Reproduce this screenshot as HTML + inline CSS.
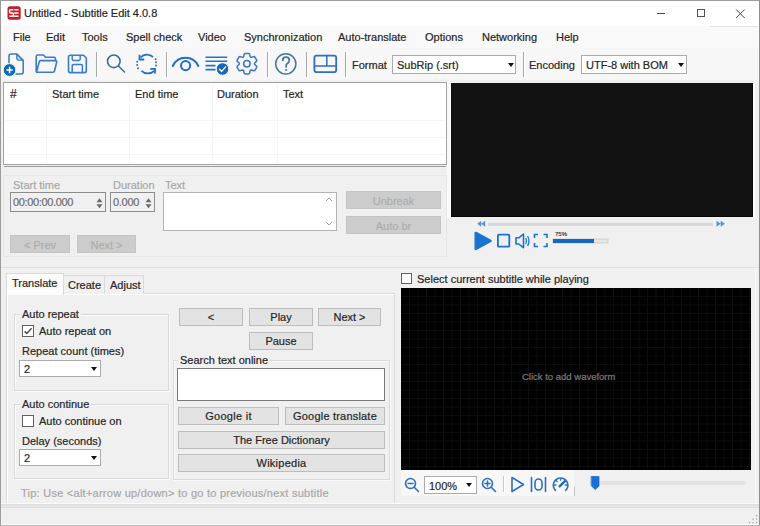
<!DOCTYPE html>
<html><head><meta charset="utf-8">
<style>
*{box-sizing:border-box;margin:0;padding:0}
html,body{width:760px;height:526px;overflow:hidden;background:#f0f0f0}
body{font-family:"Liberation Sans",sans-serif;font-size:11px;color:#262626;position:relative;-webkit-text-stroke:0.2px}
.a{position:absolute}
.t{position:absolute;white-space:nowrap;line-height:12px}
.dis{color:#a8a8a8}
.btn{position:absolute;background:#e3e3e3;border:1px solid #bdbdbd;text-align:center;line-height:17px;white-space:nowrap}
.btnd{position:absolute;background:#cccccc;border:1px solid #c4c4c4;color:#adadad;text-align:center;line-height:19px;white-space:nowrap}
.sep{position:absolute;width:1px;background:#a8a8a8;box-shadow:1px 0 0 #fff}
.combo{position:absolute;background:#fff;border:1px solid #ababab;white-space:nowrap}
.arrow{position:absolute;width:0;height:0;border-left:3.5px solid transparent;border-right:3.5px solid transparent;border-top:4px solid #111}
.gb{position:absolute;border:1px solid #d9d9d9;box-shadow:inset 1px 1px 0 #fbfbfb,1px 1px 0 #fbfbfb}
.cb{position:absolute;width:12px;height:12px;border:1.4px solid #606060;background:#fff}
</style></head><body>
<!-- window frame -->
<div class="a" style="left:0;top:0;width:760px;height:526px;border:1px solid #9c9c9c;border-right-color:#8f8f8f;border-bottom-color:#b8b8b8"></div>
<!-- title bar -->
<div class="a" style="left:1px;top:1px;width:758px;height:25px;background:#fff"></div>
<svg class="a" style="left:0;top:0" width="30" height="26"><rect x="7.5" y="6.2" width="13.2" height="13.5" rx="2.5" fill="#c41f2b"/><path d="M13.4 9.7H10.4Q9.6 9.7 9.6 10.5V12.1Q9.6 12.9 10.4 12.9H12.6Q13.4 12.9 13.4 13.7V15.4Q13.4 16.2 12.6 16.2H9.4M14.2 9.7H18.5M14.2 12.9H18.5M14.2 16.2H18.5" fill="none" stroke="#fff" stroke-width="1.5"/></svg>
<div class="t" style="left:24px;top:7px;font-size:11px">Untitled - Subtitle Edit 4.0.8</div>
<div class="a" style="left:657px;top:13px;width:8px;height:1px;background:#505050"></div>
<div class="a" style="left:697px;top:9px;width:8px;height:8px;border:1px solid #505050"></div>
<svg class="a" style="left:735px;top:8px" width="11" height="11"><path d="M1.2 1.5L9.7 10M9.7 1.5L1.2 10" stroke="#444" stroke-width="1"/></svg>
<!-- menu bar -->
<div class="a" style="left:1px;top:26px;width:758px;height:22px;background:#f9f9f9"></div>
<div class="a" style="left:710px;top:26px;width:48px;height:1px;background:#e2e2e2"></div>
<div class="t" style="left:13px;top:31px">File</div>
<div class="t" style="left:46px;top:31px">Edit</div>
<div class="t" style="left:82px;top:31px">Tools</div>
<div class="t" style="left:126px;top:31px">Spell check</div>
<div class="t" style="left:198px;top:31px">Video</div>
<div class="t" style="left:244px;top:31px">Synchronization</div>
<div class="t" style="left:338px;top:31px">Auto-translate</div>
<div class="t" style="left:425px;top:31px">Options</div>
<div class="t" style="left:482px;top:31px">Networking</div>
<div class="t" style="left:556px;top:31px">Help</div>
<!-- toolbar -->
<div class="a" style="left:1px;top:48px;width:758px;height:32px;background:#f7f7f7"></div>
<div class="sep" style="left:96px;top:52px;height:25px"></div>
<div class="sep" style="left:166px;top:52px;height:25px"></div>
<div class="sep" style="left:267px;top:52px;height:25px"></div>
<div class="sep" style="left:306px;top:52px;height:25px"></div>
<div class="sep" style="left:345px;top:52px;height:25px"></div>
<div class="sep" style="left:523px;top:52px;height:25px"></div>
<div class="t" style="left:352px;top:59px">Format</div>
<div class="combo" style="left:392px;top:55px;width:124px;height:19px"><span class="t" style="left:4px;top:3px">SubRip (.srt)</span><div class="arrow" style="left:115px;top:7px"></div></div>
<div class="t" style="left:529px;top:59px">Encoding</div>
<div class="combo" style="left:581px;top:55px;width:106px;height:19px"><span class="t" style="left:4px;top:3px">UTF-8 with BOM</span><div class="arrow" style="left:96px;top:7px"></div></div>
<svg class="a" style="left:0;top:0" width="760" height="526" fill="none" stroke-linecap="round" stroke-linejoin="round">
<!-- new file -->
<path d="M9 63V56Q9 54 11 54H16.8L23.2 60.4V72Q23.2 74 21.2 74H16" stroke="#3f78b4" stroke-width="1.5"/>
<path d="M16.8 54.3V58.6Q16.8 60.1 18.3 60.1H22.9Z" fill="#c2e2f8" stroke="#3f78b4" stroke-width="1.3"/>
<circle cx="9.6" cy="70" r="6.4" fill="#0f69b9" stroke="#f7f7f7" stroke-width="1"/>
<path d="M9.6 66.8V73.2M6.4 70H12.8" stroke="#fff" stroke-width="1.6" stroke-linecap="butt"/>
<!-- open folder -->
<path d="M36.2 71.5V56.5Q36.2 55 37.7 55H43.5L45.5 57.2H54Q55.5 57.2 55.5 58.7V60.5" stroke="#3a7cca" stroke-width="1.6"/>
<path d="M36.5 72.2L39.2 61.8Q39.5 60.6 40.7 60.6H55.5Q57 60.6 56.7 62L54.5 71Q54.2 72.2 53 72.2Z" stroke="#3a7cca" stroke-width="1.6"/>
<!-- save -->
<path d="M68.5 57Q68.5 55.2 70.3 55.2H83.5L86.3 58V70.8Q86.3 72.6 84.5 72.6H70.3Q68.5 72.6 68.5 70.8Z" stroke="#3a7cca" stroke-width="1.6"/>
<path d="M72.2 55.5V59Q72.2 60.4 73.6 60.4H78.8Q80.2 60.4 80.2 59V55.5" stroke="#3a7cca" stroke-width="1.5"/>
<path d="M72.2 72.3V65.8Q72.2 64.6 73.4 64.6H81.2Q82.4 64.6 82.4 65.8V72.3" stroke="#3a7cca" stroke-width="1.5"/>
<!-- search -->
<circle cx="113.8" cy="61.3" r="6.3" stroke="#3c6c9c" stroke-width="1.6"/>
<path d="M118.5 66L124.5 72" stroke="#3c6c9c" stroke-width="1.6"/>
<!-- sync -->
<path d="M140.5 57.5A9 9 0 0 1 153 57" stroke="#1f70c6" stroke-width="1.8" stroke-linecap="butt"/>
<path d="M139.5 54.8V59.5H144.2" stroke="#1f70c6" stroke-width="1.8" stroke-linecap="butt" stroke-linejoin="miter"/>
<path d="M141.5 70.8A9 9 0 0 0 154 71" stroke="#1f70c6" stroke-width="1.8" stroke-linecap="butt"/>
<path d="M155 73.5V68.8H150.3" stroke="#1f70c6" stroke-width="1.8" stroke-linecap="butt" stroke-linejoin="miter"/>
<g fill="#48698c" stroke="none"><circle cx="137.2" cy="61.8" r="1"/><circle cx="137.2" cy="65" r="1"/><circle cx="138" cy="68.2" r="1"/><circle cx="155.6" cy="59.3" r="1"/><circle cx="156" cy="62.2" r="1"/><circle cx="156" cy="65.5" r="1"/></g>
<!-- eye -->
<path d="M172.8 66A14 14 0 0 1 198.3 66" stroke="#1f70c6" stroke-width="2"/>
<circle cx="185.6" cy="65.6" r="4.6" stroke="#1f70c6" stroke-width="2"/>
<!-- list check -->
<path d="M205.5 57.2H227.2M205.5 61.2H227.2M205.5 65.6H215.5M205.5 69.6H215.5" stroke="#2372c6" stroke-width="1.6" stroke-linecap="butt"/>
<circle cx="222.6" cy="69" r="6.3" fill="#1569bd" stroke="#f7f7f7" stroke-width="1"/>
<path d="M219.6 69.3L221.7 71.4L225.6 66.9" stroke="#fff" stroke-width="1.4"/>
<!-- gear -->
<path d="M243.10 57.12L243.57 56.87L244.29 53.94L245.09 53.46L248.71 53.46L249.51 53.94L250.23 56.87L250.70 57.12L251.15 57.40L254.04 56.56L254.87 57.02L256.67 60.14L256.66 61.09L254.48 63.17L254.50 63.70L254.48 64.23L256.66 66.31L256.67 67.26L254.87 70.38L254.04 70.84L251.15 70.00L250.70 70.28L250.23 70.53L249.51 73.46L248.71 73.94L245.09 73.94L244.29 73.46L243.57 70.53L243.10 70.28L242.65 70.00L239.76 70.84L238.93 70.38L237.13 67.26L237.14 66.31L239.32 64.23L239.30 63.70L239.32 63.17L237.14 61.09L237.13 60.14L238.93 57.02L239.76 56.56L242.65 57.40Z" stroke="#3a78c0" stroke-width="1.5"/>
<circle cx="246.9" cy="63.8" r="3.2" stroke="#3a78c0" stroke-width="1.5"/>
<!-- help -->
<circle cx="285.8" cy="63.8" r="10.1" stroke="#4275a8" stroke-width="1.5"/>
<path d="M282.7 60.4Q282.7 57.1 286 57.1Q289.3 57.1 289.3 60.3Q289.3 62.4 287.3 63.5Q286.1 64.2 286.1 66.2V67" stroke="#4275a8" stroke-width="1.7"/>
<circle cx="286.1" cy="70" r="1.05" fill="#4275a8" stroke="none"/>
<!-- layout -->
<rect x="314.4" y="55.6" width="21.8" height="16.6" rx="2.2" stroke="#2f6fbf" stroke-width="1.8"/>
<path d="M314.4 66H336M326.8 55.6V66" stroke="#2f6fbf" stroke-width="1.5"/>
</svg>
<!-- list view -->
<div class="a" style="left:3px;top:82px;width:444px;height:83px;background:#fff;border:1px solid #a3a3a3"></div>
<div class="a" style="left:4px;top:166px;width:442px;height:1px;background:#9a9a9a"></div>
<div class="a" style="left:447px;top:81px;width:4px;height:137px;background:#fafafa"></div>
<div class="t" style="left:10px;top:88px;font-size:12px">#</div>
<div class="t" style="left:52px;top:88px">Start time</div>
<div class="t" style="left:135px;top:88px">End time</div>
<div class="t" style="left:217px;top:88px">Duration</div>
<div class="t" style="left:283px;top:88px">Text</div>
<!-- video -->
<div class="a" style="left:451px;top:83px;width:302px;height:134px;background:#121212;border-right:1px solid #050505;border-bottom:1px solid #050505"></div>
<!-- list grid lines -->
<div class="a" style="left:46px;top:84px;width:1px;height:80px;background:#f5f5f5"></div>
<div class="a" style="left:129px;top:84px;width:1px;height:80px;background:#f5f5f5"></div>
<div class="a" style="left:212px;top:84px;width:1px;height:80px;background:#f5f5f5"></div>
<div class="a" style="left:277px;top:84px;width:1px;height:80px;background:#f5f5f5"></div>
<div class="a" style="left:5px;top:120px;width:440px;height:1px;background:#f5f5f5"></div>
<div class="a" style="left:5px;top:137px;width:440px;height:1px;background:#f5f5f5"></div>
<div class="a" style="left:5px;top:154px;width:440px;height:1px;background:#f5f5f5"></div>
<!-- edit panel -->
<div class="a" style="left:3px;top:175px;width:444px;height:82px;border:1px solid #e6e6e6"></div>
<div class="t dis" style="left:13px;top:179px">Start time</div>
<div class="t dis" style="left:113px;top:179px">Duration</div>
<div class="t dis" style="left:165px;top:179px">Text</div>
<div class="a" style="left:10px;top:192px;width:96px;height:20px;border:1px solid #8c8c8c"></div>
<div class="t" style="left:13px;top:196px;color:#6d6d6d;letter-spacing:-0.35px">00:00:00.000</div>
<svg class="a" style="left:95px;top:196px" width="9" height="14"><path d="M1.5 6.2L4.5 2.2L7.5 6.2ZM1.5 8.2L4.5 12.2L7.5 8.2Z" fill="#6a6a6a"/></svg>
<div class="a" style="left:110px;top:192px;width:45px;height:20px;border:1px solid #8c8c8c"></div>
<div class="t" style="left:113px;top:196px;color:#6d6d6d;letter-spacing:-0.3px">0.000</div>
<svg class="a" style="left:144px;top:196px" width="9" height="14"><path d="M1.5 6.2L4.5 2.2L7.5 6.2ZM1.5 8.2L4.5 12.2L7.5 8.2Z" fill="#6a6a6a"/></svg>
<div class="a" style="left:163px;top:192px;width:174px;height:39px;border:1px solid #b4b4b4;background:#fff"></div>
<svg class="a" style="left:323px;top:193px" width="12" height="37" fill="none" stroke="#a0a0a0" stroke-width="1"><path d="M3 8L6 5L9 8M3 29L6 32L9 29"/></svg>
<div class="btnd" style="left:346px;top:191px;width:95px;height:18px">Unbreak</div>
<div class="btnd" style="left:346px;top:216px;width:95px;height:18px">Auto br</div>
<div class="btnd" style="left:10px;top:235px;width:60px;height:18px">&lt; Prev</div>
<div class="btnd" style="left:77px;top:235px;width:59px;height:18px">Next &gt;</div>
<!-- video controls -->
<svg class="a" style="left:0;top:0" width="760" height="526">
<path d="M477.2 223.8L481.2 220.8V226.8ZM481.2 223.8L485.2 220.8V226.8Z" fill="#5a8fd0"/>
<rect x="488" y="222.8" width="225" height="3" fill="#d6d6d6"/>
<path d="M716.5 220.8V226.8L720.7 223.8ZM720.7 220.8V226.8L724.9 223.8Z" fill="#5a8fd0"/>
<path d="M475.8 233L490.5 240.8L475.8 248.8Z" fill="#1a73d1" stroke="#1a73d1" stroke-width="2.6" stroke-linejoin="round"/>
<rect x="497.9" y="234.7" width="11.4" height="12" rx="0.8" fill="none" stroke="#1a73d1" stroke-width="1.8"/>
<path d="M516 237.8H518.8L523.5 234V247.8L518.8 244H516Z" fill="none" stroke="#1a73d1" stroke-width="1.6" stroke-linejoin="round"/>
<path d="M525.8 238Q527.3 241 525.8 244M527.6 236Q530.4 241 527.6 246" fill="none" stroke="#1a73d1" stroke-width="1.3"/>
<path d="M534.5 238V234.5H538M543.5 234.5H547V238M547 243V246.5H543.5M538 246.5H534.5V243" fill="none" stroke="#1a73d1" stroke-width="1.6"/>
<rect x="553" y="239" width="55" height="4" fill="#e6e6e6" stroke="#c8c8c8" stroke-width="0.8"/>
<rect x="553" y="239" width="41" height="4" fill="#1466c0"/>
</svg>
<div class="t" style="left:555px;top:231px;font-size:6px;line-height:7px;color:#444">75%</div>
<!-- separator line -->
<div class="a" style="left:1px;top:267px;width:758px;height:1px;background:#e0e0e0"></div>
<!-- tab control -->
<div class="a" style="left:6px;top:293px;width:389px;height:212px;border:1px solid #dadada;background:#f0f0f0"></div>
<div class="a" style="left:7px;top:294px;width:387px;height:210px;border-left:1px solid #fff;border-top:1px solid #fff"></div>
<div class="a" style="left:63px;top:275px;width:42px;height:19px;border:1px solid #dadada;border-bottom:none;background:#f0f0f0"></div>
<div class="a" style="left:104px;top:275px;width:40px;height:19px;border:1px solid #dadada;border-bottom:none;background:#f0f0f0"></div>
<div class="a" style="left:6px;top:273px;width:58px;height:22px;border:1px solid #dadada;border-bottom:none;background:#fcfcfc"></div>
<div class="t" style="left:12px;top:277px">Translate</div>
<div class="t" style="left:68px;top:279px">Create</div>
<div class="t" style="left:110px;top:279px">Adjust</div>
<!-- auto repeat group -->
<div class="gb" style="left:14px;top:314px;width:155px;height:77px"></div>
<div class="t" style="left:20px;top:308px;background:#f0f0f0;padding:0 2px">Auto repeat</div>
<div class="cb" style="left:22px;top:325px"></div>
<svg class="a" style="left:22px;top:325px" width="12" height="12"><path d="M2.6 6.4L4.8 8.4L9.6 3.2" fill="none" stroke="#505050" stroke-width="1.5"/></svg>
<div class="t" style="left:39px;top:325px">Auto repeat on</div>
<div class="t" style="left:22px;top:345px">Repeat count (times)</div>
<div class="combo" style="left:19px;top:360px;width:82px;height:17px"><span class="t" style="left:4px;top:2px">2</span><div class="arrow" style="left:71px;top:6px"></div></div>
<!-- auto continue group -->
<div class="gb" style="left:14px;top:404px;width:155px;height:75px"></div>
<div class="t" style="left:20px;top:398px;background:#f0f0f0;padding:0 2px">Auto continue</div>
<div class="cb" style="left:22px;top:415px"></div>
<div class="t" style="left:39px;top:415px">Auto continue on</div>
<div class="t" style="left:22px;top:435px">Delay (seconds)</div>
<div class="combo" style="left:19px;top:449px;width:82px;height:17px"><span class="t" style="left:4px;top:2px">2</span><div class="arrow" style="left:71px;top:6px"></div></div>
<!-- buttons -->
<div class="btn" style="left:179px;top:308px;width:64px;height:18px">&lt;</div>
<div class="btn" style="left:249px;top:308px;width:64px;height:18px">Play</div>
<div class="btn" style="left:318px;top:308px;width:63px;height:18px">Next &gt;</div>
<div class="btn" style="left:249px;top:332px;width:64px;height:18px">Pause</div>
<div class="gb" style="left:173px;top:360px;width:217px;height:120px"></div>
<div class="t" style="left:178px;top:354px;background:#f0f0f0;padding:0 2px">Search text online</div>
<div class="a" style="left:177px;top:368px;width:208px;height:33px;background:#fff;border:1px solid #7a7a7a"></div>
<div class="btn" style="left:178px;top:407px;width:101px;height:18px;letter-spacing:0.3px">Google it</div>
<div class="btn" style="left:285px;top:407px;width:100px;height:18px;letter-spacing:0.2px">Google translate</div>
<div class="btn" style="left:178px;top:431px;width:207px;height:18px">The Free Dictionary</div>
<div class="btn" style="left:178px;top:454px;width:207px;height:18px;letter-spacing:0.25px">Wikipedia</div>
<div class="t dis" style="left:21px;top:487px;letter-spacing:0.25px">Tip: Use &lt;alt+arrow up/down&gt; to go to previous/next subtitle</div>
<!-- right bottom -->
<div class="cb" style="left:401px;top:273px;width:11px;height:11px"></div>
<div class="t" style="left:417px;top:273px">Select current subtitle while playing</div>
<svg class="a" style="left:401px;top:288px" width="350" height="182"><rect width="350" height="182" fill="#000"/><path d="M8.5 0V181M17 0V181M25.5 0V181M34 0V181M42.5 0V181M51 0V181M59.5 0V181M68 0V181M76.5 0V181M85 0V181M93.5 0V181M102 0V181M110.5 0V181M119 0V181M127.5 0V181M136 0V181M144.5 0V181M153 0V181M161.5 0V181M170 0V181M178.5 0V181M187 0V181M195.5 0V181M204 0V181M212.5 0V181M221 0V181M229.5 0V181M238 0V181M246.5 0V181M255 0V181M263.5 0V181M272 0V181M280.5 0V181M289 0V181M297.5 0V181M306 0V181M314.5 0V181M323 0V181M331.5 0V181M340 0V181M348.5 0V181M0 8.5H350M0 17H350M0 25.5H350M0 34H350M0 42.5H350M0 51H350M0 59.5H350M0 68H350M0 76.5H350M0 85H350M0 93.5H350M0 102H350M0 110.5H350M0 119H350M0 127.5H350M0 136H350M0 144.5H350M0 153H350M0 161.5H350M0 170H350M0 178.5H350" stroke="#0d0d0d" stroke-width="1"/></svg>
<div class="t" style="left:522px;top:371px;color:#7c7c7c;font-size:9.5px">Click to add waveform</div>
<div class="a" style="left:401px;top:470px;width:173px;height:26px;background:#f7f7f7"></div>
<div class="a" style="left:574px;top:487px;width:1px;height:9px;background:#c8c8c8"></div>
<div class="combo" style="left:424px;top:476px;width:53px;height:18px"><span class="t" style="left:4px;top:3px">100%</span><div class="arrow" style="left:41px;top:6px"></div></div>
<div class="sep" style="left:503px;top:476px;height:16px;background:#c8c8c8"></div>
<svg class="a" style="left:0;top:0" width="760" height="526" fill="none" stroke-linecap="round">
<circle cx="410.5" cy="483.5" r="5" stroke="#2f6fbf" stroke-width="1.6"/><path d="M408 483.5H413M414.2 487.2L418.5 491.5" stroke="#2f6fbf" stroke-width="1.6"/>
<circle cx="487.5" cy="483.5" r="5" stroke="#2f6fbf" stroke-width="1.6"/><path d="M485 483.5H490M487.5 481V486M491.2 487.2L495.5 491.5" stroke="#2f6fbf" stroke-width="1.6"/>
<path d="M512 477.5L523.5 484.5L512 491.5Z" stroke="#2f6fbf" stroke-width="1.6" stroke-linejoin="round"/>
<path d="M531.5 477.5V491.5M545.5 477.5V491.5" stroke="#2f6fbf" stroke-width="1.6"/><rect x="535" y="479" width="7" height="11" rx="3.5" stroke="#2f6fbf" stroke-width="1.6"/>
<path d="M555.4 490.4A7.3 7.3 0 1 1 565.8 490.4" stroke="#2f6fbf" stroke-width="1.7"/><path d="M560.6 478.8V480.2M554.6 485H556M565.2 485H566.6M556.3 480.7L557.2 481.6" stroke="#2f6fbf" stroke-width="1.3"/><path d="M559.6 486.4L564.8 481.2" stroke="#1b64b8" stroke-width="2.3"/>
<path d="M591.5 476.5H599V486L595.2 489.5L591.5 486Z" fill="#1a6fd0" stroke="#1a6fd0" stroke-width="0.8"/>
<rect x="600" y="481" width="145.5" height="4" rx="2" fill="#e2e2e2" stroke="none"/>
</svg>
<div class="a" style="left:1px;top:503px;width:758px;height:1px;background:#fafafa"></div>
<div class="a" style="left:1px;top:504px;width:758px;height:4px;background:#e6e6e6;border-top:1px solid #dedede;border-bottom:1px solid #dcdcdc"></div>
<div class="a" style="left:1px;top:524px;width:758px;height:1px;background:#fafafa"></div>
<svg class="a" style="left:740px;top:505px" width="20" height="21"><g fill="#9c9c9c"><rect x="16" y="10" width="1.2" height="1.2"/><rect x="12.5" y="13.5" width="1.2" height="1.2"/><rect x="16" y="13.5" width="1.2" height="1.2"/><rect x="9" y="17" width="1.2" height="1.2"/><rect x="12.5" y="17" width="1.2" height="1.2"/><rect x="16" y="17" width="1.2" height="1.2"/></g></svg>
<div class="a" style="left:755px;top:268px;width:1px;height:236px;background:#fafafa"></div>
<div class="a" style="left:753px;top:81px;width:2px;height:137px;background:#fafafa"></div>
</body></html>
